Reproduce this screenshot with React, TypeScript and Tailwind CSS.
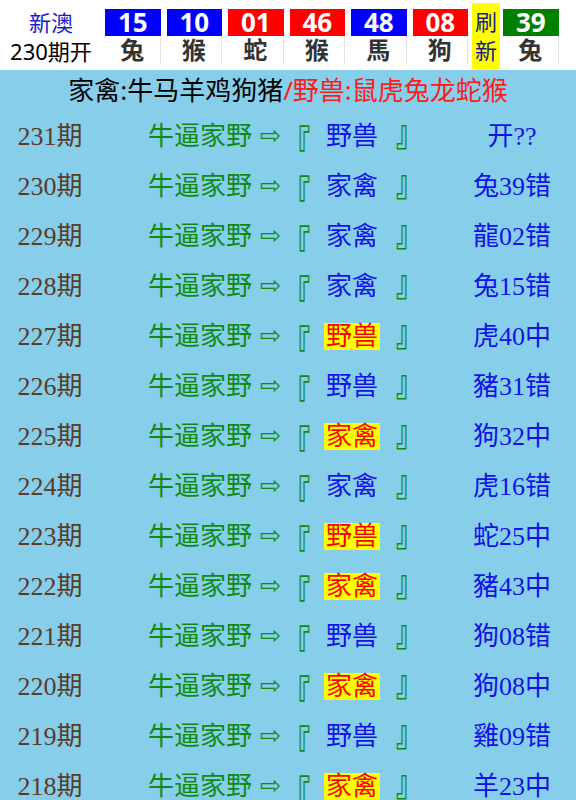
const balls = [
  { num: "15", zodiac: "兔", color: "bg-[#0000ff]" },
  { num: "10", zodiac: "猴", color: "bg-[#0000ff]" },
  { num: "01", zodiac: "蛇", color: "bg-[#ff0000]" },
  { num: "46", zodiac: "猴", color: "bg-[#ff0000]" },
  { num: "48", zodiac: "馬", color: "bg-[#0000ff]" },
  { num: "08", zodiac: "狗", color: "bg-[#ff0000]" },
];

const lastBall = { num: "39", zodiac: "兔", color: "bg-[#008000]" };

const rows = [
  { period: "231", pick: "野兽", result: "开??", hit: false },
  { period: "230", pick: "家禽", result: "兔39错", hit: false },
  { period: "229", pick: "家禽", result: "龍02错", hit: false },
  { period: "228", pick: "家禽", result: "兔15错", hit: false },
  { period: "227", pick: "野兽", result: "虎40中", hit: true },
  { period: "226", pick: "野兽", result: "豬31错", hit: false },
  { period: "225", pick: "家禽", result: "狗32中", hit: true },
  { period: "224", pick: "家禽", result: "虎16错", hit: false },
  { period: "223", pick: "野兽", result: "蛇25中", hit: true },
  { period: "222", pick: "家禽", result: "豬43中", hit: true },
  { period: "221", pick: "野兽", result: "狗08错", hit: false },
  { period: "220", pick: "家禽", result: "狗08中", hit: true },
  { period: "219", pick: "野兽", result: "雞09错", hit: false },
  { period: "218", pick: "家禽", result: "羊23中", hit: true },
];

const sans = "font-['Noto_Sans','Noto_Sans_CJK_SC',sans-serif]";
const serif = "font-['Liberation_Serif','Noto_Sans_CJK_SC',serif]";
const cjk = "font-['Noto_Sans_CJK_SC',sans-serif]";

function Ball({ num, zodiac, color }: { num: string; zodiac: string; color: string }) {
  return (
    <div className="w-[61.5px] shrink-0 px-[3px] pt-[9px]">
      <div className={`${color} h-[27px] flex items-center justify-center text-white font-bold text-[26px] leading-[27px]`}>
        {num}
      </div>
      <div className="h-[28px] border-r border-[#e2e2e2] flex items-center justify-center text-[#333] font-bold text-[24px] leading-[28px]">
        {zodiac}
      </div>
    </div>
  );
}

function Header() {
  return (
    <div className={`h-[70px] bg-white flex ${sans}`}>
      <div className="w-[102px] shrink-0 flex flex-col items-center pt-[8px]">
        <div className="text-[#1c1cc8] text-[22px] leading-[29px]">新澳</div>
        <div className="text-black text-[22px] leading-[29px]">230期开</div>
      </div>
      {balls.map((b, i) => (
        <Ball key={i} {...b} />
      ))}
      <div className="w-[28px] shrink-0 ml-[1px] pt-[3px]">
        <div className="bg-[#ffff00] h-[66px] flex flex-col items-center justify-center text-[#1a1a8c] text-[22px] leading-[29px]">
          <span>刷</span>
          <span>新</span>
        </div>
      </div>
      <Ball {...lastBall} />
    </div>
  );
}

export default function App() {
  return (
    <div lang="zh-CN" className="w-[576px] h-[800px] overflow-hidden bg-white">
      <Header />
      <div className="bg-[#87ceeb]">
        <div className={`h-[41px] flex items-center justify-center text-[26px] ${sans}`}>
          <span className="text-black">家禽:牛马羊鸡狗猪</span>
          <span className="text-[#ff1a1a]">/野兽:鼠虎兔龙蛇猴</span>
        </div>
        {rows.map((r) => (
          <div key={r.period} className={`h-[50px] flex items-center text-[26px] ${serif}`}>
            <div className="w-[100px] shrink-0 text-center text-[#5b3b2a]">{r.period}期</div>
            <div className="w-[358px] shrink-0 flex items-center pl-[48px] text-[#118a11]">
              <span>牛逼家野</span>
              <span className="ml-[8px] text-[25px] font-['DejaVu_Sans',sans-serif]">⇨</span>
              <span className={`${cjk} font-bold inline-block ml-[3px] scale-y-[1.45] translate-y-[5px]`}>『</span>
              <span
                className={`ml-[14px] mr-[16px] inline-block h-[27px] leading-[27px] px-[2px] ${
                  r.hit ? "bg-[#ffff00] text-[#ff0000]" : "text-[#1212e6]"
                }`}
              >
                {r.pick}
              </span>
              <span className={`${cjk} font-bold inline-block scale-y-[1.4] -translate-y-[7px]`}>』</span>
            </div>
            <div className="w-[108px] shrink-0 text-center text-[#1212e6]">{r.result}</div>
          </div>
        ))}
      </div>
    </div>
  );
}
